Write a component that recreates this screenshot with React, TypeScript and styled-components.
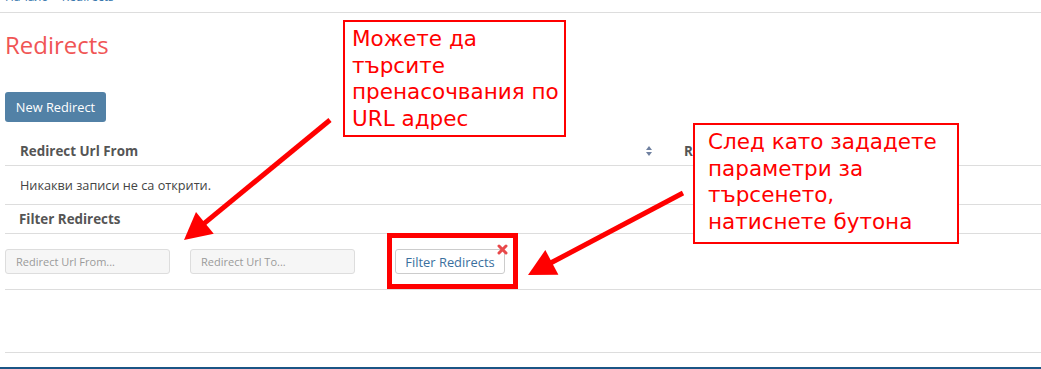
import React from 'react'
import styled, { createGlobalStyle } from 'styled-components'

const GlobalStyle = createGlobalStyle`
  html, body {
    margin: 0;
    padding: 0;
    background: #fff;
  }
  body {
    font-family: 'Open Sans', 'Liberation Sans', sans-serif;
    color: #555;
  }
`

type Pt = [number, number]

// arrow shaft + triangular head, from start to tip
const arrowShape = (from: Pt, tip: Pt, headLen: number, headHalf: number) => {
  const dx = tip[0] - from[0]
  const dy = tip[1] - from[1]
  const len = Math.sqrt(dx * dx + dy * dy)
  const ux = dx / len
  const uy = dy / len
  const bx = tip[0] - ux * headLen
  const by = tip[1] - uy * headLen
  const px = -uy
  const py = ux
  return {
    shaft: { x1: from[0], y1: from[1], x2: bx + ux * 2, y2: by + uy * 2 },
    head: `${tip[0]},${tip[1]} ${bx + px * headHalf},${by + py * headHalf} ${bx - px * headHalf},${by - py * headHalf}`,
  }
}

const arrows = [
  arrowShape([330, 120], [184, 240], 27, 14),
  arrowShape([683, 193], [528, 275], 27, 14),
]

export default function App() {
  return (
    <>
      <GlobalStyle />
      <S.Page>
        <S.Breadcrumb>
          <S.Crumb>Начало</S.Crumb>
          <S.CrumbSep>·</S.CrumbSep>
          <S.Crumb>Redirects</S.Crumb>
        </S.Breadcrumb>

        <S.Content>
          <S.Title>Redirects</S.Title>
          <S.PrimaryButton>New Redirect</S.PrimaryButton>

          <S.Table>
            <S.HeaderRow>
              <S.HeadCell $first>
                Redirect Url From
                <S.SortIcon width="6" height="10" viewBox="0 0 6 10">
                  <path d="M3 0 L6 4 L0 4 Z" />
                  <path d="M0 6 L6 6 L3 10 Z" />
                </S.SortIcon>
              </S.HeadCell>
              <S.HeadCell>Redirect Url To</S.HeadCell>
            </S.HeaderRow>
            <S.Row $height={38}>
              <S.Cell>Никакви записи не са открити.</S.Cell>
            </S.Row>
            <S.Row $height={28}>
              <S.HeadCell>Filter Redirects</S.HeadCell>
            </S.Row>
            <S.FilterRow>
              <S.Input placeholder="Redirect Url From..." />
              <S.Input placeholder="Redirect Url To..." />
              <S.FilterButton>
                Filter Redirects
                <S.CloseMark width="11" height="11" viewBox="0 0 11 11">
                  <line x1="2" y1="2" x2="9" y2="9" />
                  <line x1="9" y1="2" x2="2" y2="9" />
                </S.CloseMark>
              </S.FilterButton>
            </S.FilterRow>
            <S.Row $height={62} />
          </S.Table>
        </S.Content>

        <S.Footer />

        <S.Callout $left={343} $top={20} $width={223} $height={117} $padX={7}>
          Можете да<br />
          търсите<br />
          пренасочвания по<br />
          URL адрес
        </S.Callout>
        <S.Callout $left={693} $top={123} $width={266} $height={121} $padX={13}>
          След като зададете<br />
          параметри за<br />
          търсенето,<br />
          натиснете бутона
        </S.Callout>
        <S.Highlight />

        <S.Arrows width="1041" height="369" viewBox="0 0 1041 369">
          {arrows.map((a, i) => (
            <g key={i}>
              <line {...a.shaft} />
              <polygon points={a.head} />
            </g>
          ))}
        </S.Arrows>
      </S.Page>
    </>
  )
}

const S = {
  Page: styled.div`
    position: relative;
    width: 1041px;
    height: 369px;
    overflow: hidden;
    background: #fff;
  `,
  Breadcrumb: styled.div`
    display: flex;
    align-items: flex-end;
    gap: 5px;
    height: 12px;
    padding-left: 5px;
    border-bottom: 1px solid #ddd;
    overflow: hidden;
    font-size: 12px;
    line-height: 12px;
  `,
  Crumb: styled.span`
    color: #3a78ad;
    transform: translateY(-9px);
  `,
  CrumbSep: styled.span`
    color: #999;
    transform: translateY(-9px);
  `,
  Content: styled.div`
    padding-left: 5px;
  `,
  Title: styled.h1`
    margin: 17px 0 0;
    font-size: 24px;
    line-height: 30px;
    font-weight: 400;
    color: #f05555;
  `,
  PrimaryButton: styled.button`
    display: block;
    margin-top: 32px;
    width: 101px;
    height: 30px;
    padding: 0;
    border: 0;
    border-radius: 3px;
    background: #5281a6;
    color: #fff;
    font-family: 'Open Sans', 'Liberation Sans', sans-serif;
    font-size: 12.8px;
  `,
  Table: styled.div`
    margin-top: 15px;
  `,
  HeaderRow: styled.div`
    display: grid;
    grid-template-columns: 665px 1fr;
    height: 28px;
    border-bottom: 1px solid #ddd;
  `,
  Row: styled.div<{ $height: number }>`
    display: flex;
    align-items: center;
    height: ${p => p.$height}px;
    border-bottom: 1px solid #ddd;
  `,
  HeadCell: styled.div<{ $first?: boolean }>`
    display: flex;
    align-items: center;
    justify-content: space-between;
    padding: ${p => (p.$first ? '0 18px 0 15px' : '0 14px')};
    font-size: 13.4px;
    font-weight: 700;
    color: #555;
  `,
  Cell: styled.div`
    padding: 0 15px;
    font-size: 12.7px;
    color: #444;
  `,
  SortIcon: styled.svg`
    fill: #6f80a0;
  `,
  FilterRow: styled.div`
    display: flex;
    align-items: center;
    gap: 20px;
    height: 55px;
    border-bottom: 1px solid #ddd;
  `,
  Input: styled.input`
    box-sizing: border-box;
    width: 165px;
    height: 25px;
    padding: 0 10px;
    border: 1px solid #ddd;
    border-radius: 3px;
    background: #f6f6f6;
    font-family: 'Open Sans', 'Liberation Sans', sans-serif;
    font-size: 11px;
    outline: none;
    &::placeholder {
      color: #9a9a9a;
    }
  `,
  FilterButton: styled.button`
    position: relative;
    box-sizing: border-box;
    margin-left: 20px;
    width: 110px;
    height: 25px;
    padding: 0;
    border: 1px solid #ccc;
    border-radius: 3px;
    background: #fff;
    color: #3a6f9e;
    font-family: 'Open Sans', 'Liberation Sans', sans-serif;
    font-size: 12.9px;
  `,
  CloseMark: styled.svg`
    position: absolute;
    right: -4px;
    top: -6px;
    stroke: #e8494b;
    stroke-width: 3;
    stroke-linecap: round;
  `,
  Footer: styled.div`
    position: absolute;
    left: 0;
    right: 0;
    bottom: 0;
    height: 2px;
    background: #1b5585;
  `,
  Callout: styled.div<{ $left: number; $top: number; $width: number; $height: number; $padX: number }>`
    position: absolute;
    left: ${p => p.$left}px;
    top: ${p => p.$top}px;
    width: ${p => p.$width}px;
    height: ${p => p.$height}px;
    box-sizing: border-box;
    padding: 4px ${p => p.$padX}px 0;
    border: 2px solid #f00;
    background: #fff;
    color: #f00;
    font-family: 'DejaVu Sans', 'Liberation Sans', sans-serif;
    font-size: 21.5px;
    line-height: 26.5px;
    white-space: nowrap;
  `,
  Highlight: styled.div`
    position: absolute;
    left: 387px;
    top: 233px;
    width: 131px;
    height: 56px;
    box-sizing: border-box;
    border: 5px solid #f00;
  `,
  Arrows: styled.svg`
    position: absolute;
    left: 0;
    top: 0;
    pointer-events: none;
    line {
      stroke: #f00;
      stroke-width: 5;
    }
    polygon {
      fill: #f00;
    }
  `,
}
